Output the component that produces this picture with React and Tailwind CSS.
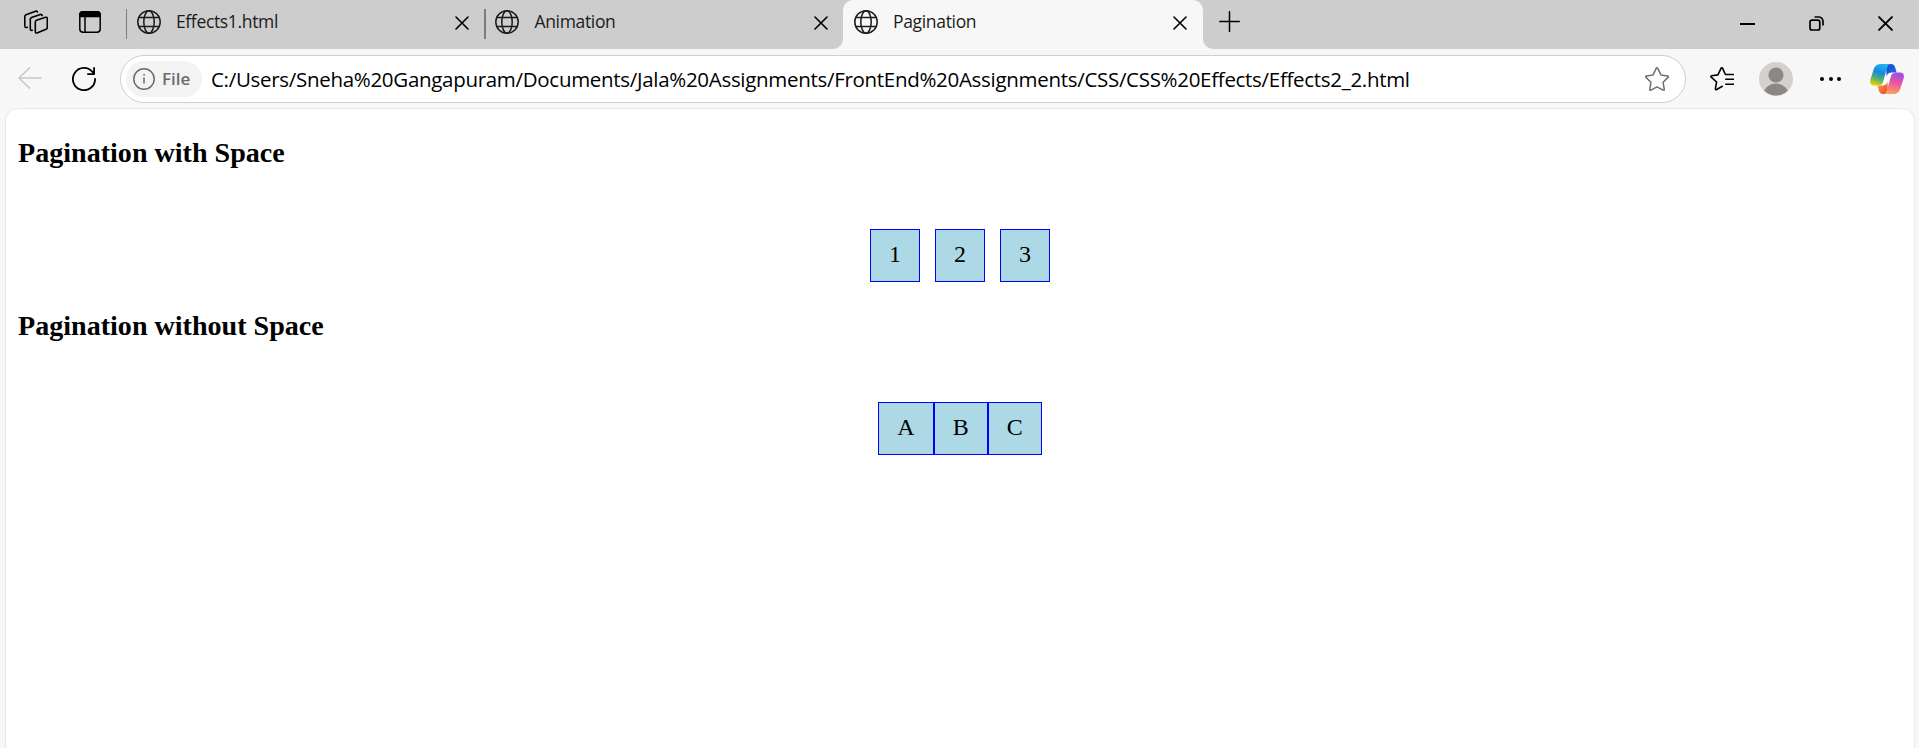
import React from "react";

const stroke = { fill: "none", stroke: "currentColor", strokeLinecap: "round", strokeLinejoin: "round" };

function Globe() {
  return (
    <svg className="size-6 shrink-0 text-[#1b1b1b]" viewBox="0 0 24 24" {...stroke} strokeWidth="1.5">
      <circle cx="12" cy="12" r="11.2" />
      <ellipse cx="12" cy="12" rx="5.2" ry="11.2" />
      <path d="M1.8 7.6h20.4M1.8 16.4h20.4" />
    </svg>
  );
}

function Cross({ className, width = 1.6 }) {
  return (
    <svg className={className} viewBox="0 0 14 14" {...stroke} strokeWidth={width}>
      <path d="M1 1l12 12M13 1L1 13" />
    </svg>
  );
}

function Tab({ title, active }) {
  return (
    <div className={active ? "w-[360px] bg-[#cdcdcd]" : "flex w-[359px]"}>
      {!active && <div className="mt-[9px] h-[30px] w-[1.5px] bg-[#7c7c7c]" />}
      <div
        className={
          active
            ? "flex h-[49px] items-start rounded-t-[10px] bg-[#f7f7f7] pl-[11px] pr-[16px] pt-[10px]"
            : "flex flex-1 items-start pl-[9.5px] pr-[15px] pt-[10px]"
        }
      >
        <Globe />
        <span className="ml-[15px] flex-1 text-[17.5px] leading-[23px] tracking-[-0.33px] text-[#1b1b1b]">{title}</span>
        <Cross className="mt-[6px] size-[14px]" />
      </div>
    </div>
  );
}

function TabBar() {
  return (
    <header className="flex h-[49px] bg-[#f7f7f7]">
      <div className="flex w-[843px] rounded-br-[10px] bg-[#cdcdcd]">
        <div className="flex w-[126px] items-start pl-6 pt-[10px]">
          <svg className="size-6" viewBox="0 0 24 24" {...stroke} strokeWidth="1.6">
            <path d="M12.4 10.2 21.6 7.3q1.7-.4 1.7 1.3v8.8q0 1.4-1.2 1.9L13 22.900q-1.700.5-1.700-1.300V12q0-1.400 1.100-1.800z" />
            <path d="M8.300 20.300q-2 .5-2-1.400V9.200q0-1.300 1.200-1.800L16.300 4.500q1.500-.400 1.900 1" />
            <path d="M3.300 17.400Q.8 18 .8 16V6.600q0-1.400 1.200-1.900L11.500 1.200q1.400-.5 1.900.8" />
          </svg>
          <svg className="ml-[31px] mt-px h-[22px] w-[22px]" viewBox="0 0 22 22" {...stroke} strokeWidth="1.5">
            <rect x=".8" y=".8" width="20.400" height="20.400" rx="3.200" />
            <path d="M.8 5.500V4Q.8.8 4 .8h14q3.200 0 3.200 3.200v1.500z" fill="currentColor" />
            <path d="M6 6v15" />
          </svg>
        </div>
        <Tab title="Effects1.html" />
        <Tab title="Animation" />
      </div>
      <Tab title="Pagination" active />
      <div className="flex flex-1 items-start justify-between rounded-bl-[10px] bg-[#cdcdcd] pl-4 pr-[26px]">
        <svg className="mt-[11px] size-[21px]" viewBox="0 0 21 21" {...stroke} strokeWidth="1.5">
          <path d="M10.500.7v19.600M.7 10.500h19.600" />
        </svg>
        <div className="flex items-center gap-[54px] pt-4">
          <div className="h-[2px] w-[15px] bg-black" />
          <svg className="size-[15px]" viewBox="0 0 15 15" {...stroke} strokeWidth="1.700">
            <rect x="1" y="4.200" width="9.800" height="9.800" rx="2" />
            <path d="M5.500 1h3.700Q14 1 14 5.800V9.500" strokeLinecap="butt" />
          </svg>
          <Cross className="size-[15px]" width={1.8} />
        </div>
      </div>
    </header>
  );
}

function Copilot() {
  return (
    <svg className="h-[30px] w-[34px]" viewBox="0 0 34 30">
      <defs>
        <linearGradient id="cool" x1=".6" y1="0" x2=".3" y2="1">
          <stop offset="0" stopColor="#20b4f0" />
          <stop offset=".4" stopColor="#168bd8" />
          <stop offset=".7" stopColor="#55b368" />
          <stop offset="1" stopColor="#f3cd0b" />
        </linearGradient>
        <linearGradient id="warm" x1=".6" y1="0" x2=".4" y2="1">
          <stop offset="0" stopColor="#9a4eea" />
          <stop offset=".5" stopColor="#f0569a" />
          <stop offset="1" stopColor="#ffa05c" />
        </linearGradient>
        <linearGradient id="navy" x1="0" y1="0" x2="1" y2="1">
          <stop offset="0" stopColor="#1b48d4" />
          <stop offset="1" stopColor="#1f6be8" />
        </linearGradient>
        <linearGradient id="ember" x1="0" y1="0" x2="1" y2="1">
          <stop offset="0" stopColor="#f8b13c" />
          <stop offset="1" stopColor="#e83b3b" />
        </linearGradient>
      </defs>
      <path d="M19 8.500h7L16 21.500H9z" fill="#fff" />
      <path d="M16 0h5q3 0 4 3l1.600 5.500h-5q-4 0-5 4z" fill="url(#navy)" />
      <path d="M18 30h-5q-3 0-4-3l-1.600-5.500h5q4 0 5-4z" fill="url(#ember)" />
      <path d="M11 0h9q-2 .5-3 4l-4 14q-1 3.500-5 3.500H4q-5 0-3.600-6L3.800 5Q5.500 0 11 0z" fill="url(#cool)" />
      <path d="M23 30h-9q2-.5 3-4l4-14q1-3.500 5-3.500h4q5 0 3.600 6L30.200 25Q28.500 30 23 30z" fill="url(#warm)" />
    </svg>
  );
}

function Toolbar() {
  return (
    <div className="flex h-[59px] items-start pl-[18px] pr-[15px]">
      <svg className="mt-[18px] h-[22px] w-6 text-[#c8c8c8]" viewBox="0 0 24 22" {...stroke} strokeWidth="1.500">
        <path d="M23.200 11H.9M11.500.9L.9 11l10.600 10.100" />
      </svg>
      <svg className="ml-[30px] mt-[18px] size-6" viewBox="0 0 24 24" {...stroke} strokeWidth="1.800">
        <path d="M23.100 12A11.100 11.100 0 1 1 20.800 5.300L22 6.800M22.100.9v6.200h-6.200" />
      </svg>
      <div className="ml-6 mt-[6px] flex h-[48px] w-[1566px] items-center rounded-full border-[1.500px] border-[#cfcfcf] bg-white pl-[5px] pr-[16px]">
        <div className="flex h-9 w-[76px] items-center rounded-full bg-[#f3f3f3] pl-[7px]">
          <svg className="size-[22px]" viewBox="0 0 22 22" {...stroke} strokeWidth="1.500" color="#6b6b6b">
            <circle cx="11" cy="11" r="10.200" />
            <path d="M11 10v5" />
            <circle cx="11" cy="6.800" r=".5" fill="currentColor" strokeWidth=".8" />
          </svg>
          <span className="ml-[7px] text-[17px] font-semibold text-[#6b6b6b]">File</span>
        </div>
        <span className="ml-[9px] flex-1 whitespace-nowrap text-[20.500px] tracking-[-0.3px]">
          C:/Users/Sneha%20Gangapuram/Documents/Jala%20Assignments/FrontEnd%20Assignments/CSS/CSS%20Effects/Effects2_2.html
        </span>
        <svg className="size-6 text-[#707070]" viewBox="0 0 24 24" {...stroke} strokeWidth="1.500">
          <path d="M11.200 1.400q.8-1.300 1.600 0l3.100 6.500 6.600 1q1.400.3.500 1.500l-4.900 4.900 1.200 7q.1 1.400-1.200.8L12 19.800l-6.100 3.300q-1.300.6-1.200-.8l1.200-7L1 10.400q-.9-1.200.5-1.500l6.600-1z" />
        </svg>
      </div>
      <svg className="ml-6 mt-[18px] size-6" viewBox="0 0 24 24" {...stroke} strokeWidth="1.600">
        <path d="M12.300 19.300l-5.600 3.200q-1.500.7-1.300-.8l1.200-6.700L1.200 10.200q-1-1.100.5-1.400l6.200-.9L11 1.400q.8-1.300 1.600 0l2.800 6.100h8M15.800 12.200h7.600M15.800 17.200h7.600" />
      </svg>
      <svg className="ml-[25px] mt-[13px] size-[34px]" viewBox="0 0 34 34">
        <defs>
          <clipPath id="avatar"><circle cx="17" cy="17" r="16.500" /></clipPath>
        </defs>
        <circle cx="17" cy="17" r="17" fill="#d3d1ce" />
        <g clipPath="url(#avatar)" fill="#8b8784">
          <circle cx="17" cy="13" r="7.600" />
          <circle cx="17" cy="35" r="13.500" />
        </g>
      </svg>
      <div className="ml-[27px] mt-[28px] flex gap-1">
        <i className="size-1 rounded-full bg-black" />
        <i className="ml-px size-1 rounded-full bg-black" />
        <i className="size-1 rounded-full bg-black" />
      </div>
      <div className="ml-auto mt-[15px]"><Copilot /></div>
    </div>
  );
}

function Pagination({ items, className }) {
  return (
    <nav className={className}>
      {items.map((item) => (
        <a key={item} className="block h-[53px] border border-[#0000ff] bg-[#add8e6] px-[18px] text-[24px] leading-[49px]">
          {item}
        </a>
      ))}
    </nav>
  );
}

export default function App() {
  return (
    <div className="flex h-[748px] w-full flex-col overflow-hidden bg-[#f7f7f7] font-['Open_Sans','Noto_Sans',sans-serif] text-black">
      <TabBar />
      <Toolbar />
      <main className="ml-[5px] mr-[4px] flex-1 rounded-t-[13px] border border-b-0 border-[#e8e8e8] bg-white px-3 font-['Liberation_Serif','Times_New_Roman',serif]">
        <h3 className="mt-[28px] text-[28.080px] font-bold leading-[32px]">Pagination with Space</h3>
        <Pagination items={["1", "2", "3"]} className="mt-[60px] flex justify-center gap-[15px]" />
        <h3 className="mt-[28px] text-[28.080px] font-bold leading-[32px]">Pagination without Space</h3>
        <Pagination items={["A", "B", "C"]} className="mt-[60px] flex justify-center" />
      </main>
    </div>
  );
}
